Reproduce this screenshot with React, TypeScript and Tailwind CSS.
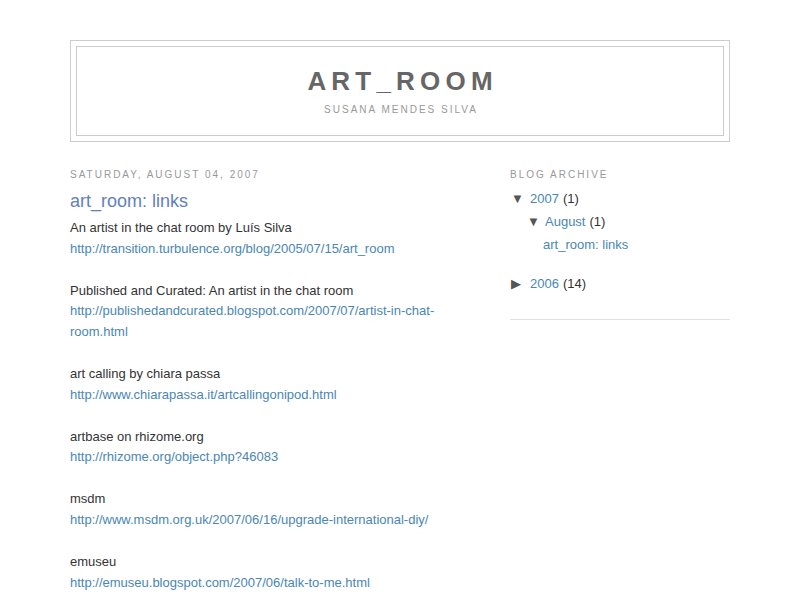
import React from "react";

const links = [
  {
    label: "An artist in the chat room by Luís Silva",
    url: "http://transition.turbulence.org/blog/2005/07/15/art_room",
  },
  {
    label: "Published and Curated: An artist in the chat room",
    url: "http://publishedandcurated.blogspot.com/2007/07/artist-in-chat-room.html",
  },
  {
    label: "art calling by chiara passa",
    url: "http://www.chiarapassa.it/artcallingonipod.html",
  },
  { label: "artbase on rhizome.org", url: "http://rhizome.org/object.php?46083" },
  {
    label: "msdm",
    url: "http://www.msdm.org.uk/2007/06/16/upgrade-international-diy/",
  },
  { label: "emuseu", url: "http://emuseu.blogspot.com/2007/06/talk-to-me.html" },
];

const App: React.FC = () => {
  return (
    <div className="min-h-screen bg-white text-[#333] font-['Liberation_Sans',Arial,sans-serif] text-[13px]">
      <div className="w-[660px] mx-auto pt-10">
        {/* header */}
        <div className="border border-[#ccc]">
          <div className="m-[5px] border border-[#ccc] text-center pt-[19px] pb-[18px]">
            <h1 className="text-[26px] leading-[31px] font-bold tracking-[0.2em] text-[#666] uppercase pl-[0.2em]">
              art_room
            </h1>
            <p className="mt-[6px] text-[10px] leading-[14px] tracking-[2px] text-[#999] uppercase pl-[2px]">
              Susana Mendes Silva
            </p>
          </div>
        </div>

        <div className="flex mt-[26px]">
          {/* main */}
          <div className="w-[410px] shrink-0">
            <h2 className="text-[10px] leading-[14px] tracking-[2px] text-[#999] uppercase">
              Saturday, August 04, 2007
            </h2>
            <h3 className="mt-[7px] text-[18px] leading-[25px] text-[#6281b9]">
              art_room: links
            </h3>
            <div className="mt-[4px] leading-[20.8px]">
              {links.map((l, i) => (
                <div key={i} className={i > 0 ? "mt-[21px]" : ""}>
                  <div>{l.label}</div>
                  <a href="#" className="text-[#4a86b3] break-words">
                    {l.url}
                  </a>
                </div>
              ))}
            </div>
          </div>

          {/* sidebar */}
          <div className="w-[220px] ml-[30px]">
            <h2 className="text-[10px] leading-[14px] tracking-[2px] text-[#999] uppercase">
              Blog Archive
            </h2>
            <div className="mt-[5px] border-b border-[#e0e0e0] pb-[24px]">
              <div className="flex items-center h-[23px]">
                <span className="w-[20px] pl-px text-[#555] text-[13px]">▼</span>
                <a href="#" className="text-[#4a86b3]">2007</a>
                <span className="ml-1">(1)</span>
              </div>
              <div className="flex items-center h-[23px] pl-[16px]">
                <span className="w-[19px] pl-px text-[#555] text-[13px]">▼</span>
                <a href="#" className="text-[#4a86b3]">August</a>
                <span className="ml-1">(1)</span>
              </div>
              <div className="flex items-center h-[23px] pl-[33px]">
                <a href="#" className="text-[#4a86b3]">art_room: links</a>
              </div>
              <div className="flex items-center h-[23px] mt-[16px]">
                <span className="w-[20px] pl-px text-[#555] text-[13px]">▶</span>
                <a href="#" className="text-[#4a86b3]">2006</a>
                <span className="ml-1">(14)</span>
              </div>
            </div>
          </div>
        </div>
      </div>
    </div>
  );
};

export default App;
